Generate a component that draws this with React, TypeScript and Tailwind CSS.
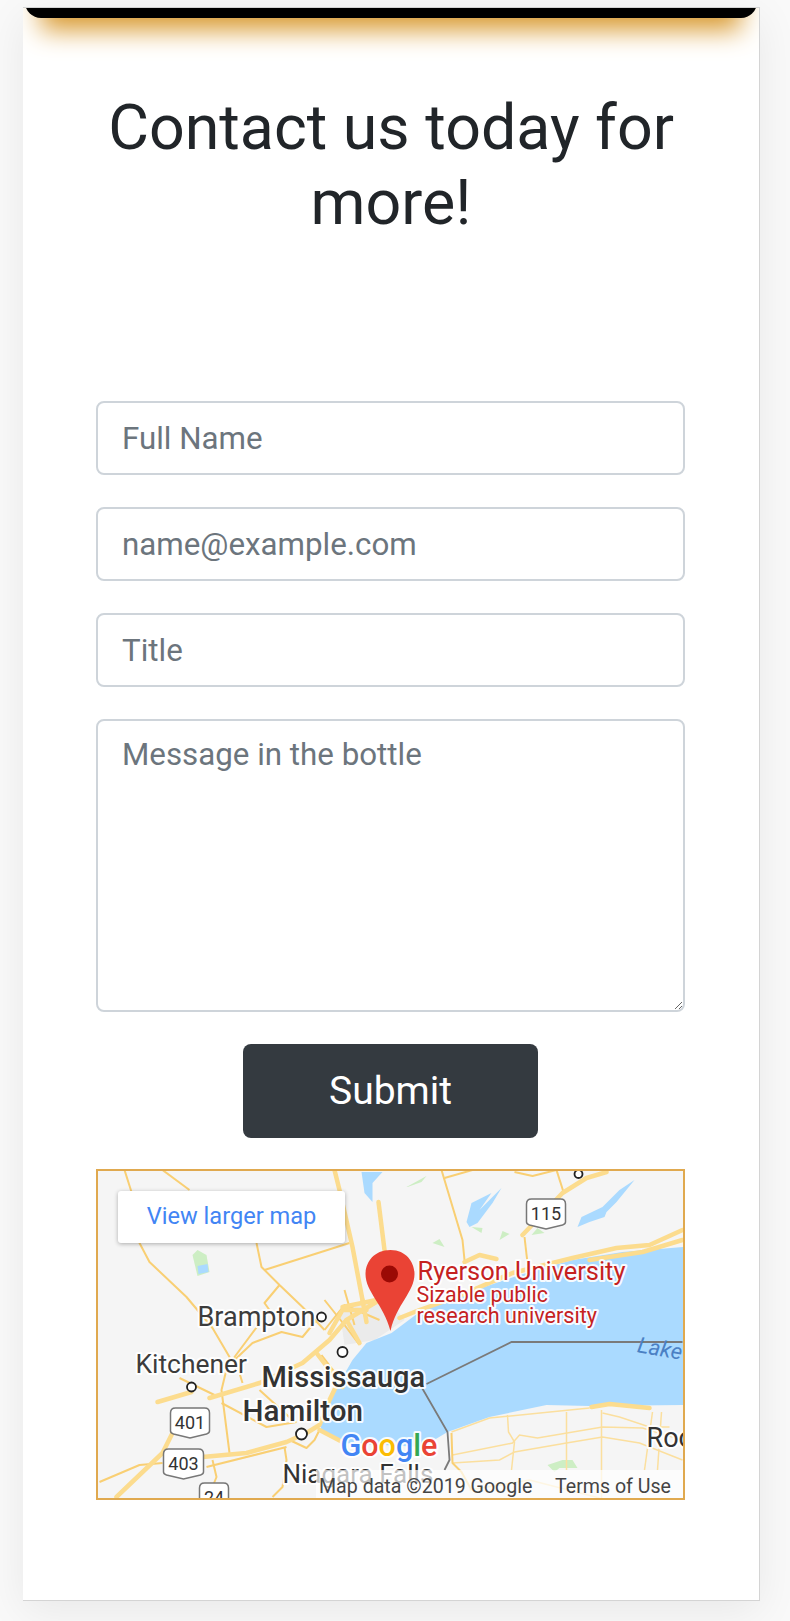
const bigRoads = [
  "335,1170 340,1190 353,1247 363,1300",
  "379,1202 385,1250 388,1262",
  "607,1172 587,1178 563,1193 523,1235",
  "683,1230 650,1245 617,1248 573,1258 513,1273 457,1297 420,1310 400,1318",
  "683,1240 643,1252 590,1260",
  "465,1262 480,1255 497,1259",
  "158,1402 192,1392",
  "210,1398 260,1383 303,1363 330,1340 347,1320 380,1300 396,1292",
  "117,1497 163,1453 173,1433",
  "203,1457 247,1453 287,1442 307,1433 320,1425 330,1400 342,1375",
  "320,1430 343,1442",
  "592,1407 610,1404 650,1408",
  "330,1333 343,1310 367,1310",
  "347,1320 360,1343",
  "363,1300 367,1322",
  "317,1353 343,1387",
  "343,1307 377,1300",
];

const thinRoads = [
  "125,1170 132,1192 140,1243 150,1262 187,1297 213,1328 230,1357 222,1390 230,1453",
  "163,1170 190,1190",
  "257,1243 262,1267 280,1285 303,1307 325,1330",
  "265,1270 350,1243",
  "280,1285 265,1303 270,1310 235,1357 243,1383",
  "442,1170 463,1240 465,1260",
  "445,1178 473,1170",
  "515,1172 533,1176 557,1170",
  "557,1170 564,1192",
  "525,1237 528,1263",
  "235,1360 253,1343 282,1332 303,1337 317,1320",
  "100,1482 140,1465 163,1463",
  "207,1467 287,1447",
  "222,1403 267,1427 297,1422",
  "260,1390 293,1420",
  "213,1460 217,1477 213,1487",
  "285,1447 287,1460 283,1487 273,1497",
  "320,1430 315,1440 307,1448 290,1440",
  "452,1433 453,1463 462,1472 472,1490",
  "180,1378 215,1395",
  "325,1300 345,1325 360,1345",
  "345,1290 355,1325",
  "325,1330 345,1305 380,1320",
  "322,1355 345,1385",
];

const southRoads = [
  "452,1432 490,1418 590,1408",
  "453,1455 513,1443 520,1435 538,1438 603,1427 643,1428 683,1440",
  "453,1463 500,1460 515,1452 567,1443 603,1437 640,1443 683,1460",
  "567,1412 567,1470",
  "602,1410 602,1498",
  "508,1415 509,1432 515,1442 512,1470",
  "653,1412 645,1470",
  "662,1412 658,1470",
  "603,1413 620,1417 650,1427 670,1427",
  "470,1490 530,1480 600,1498",
];

const green = [
  "407,1187 427,1176 422,1182 408,1187",
  "433,1243 440,1239 445,1247",
  "500,1240 503,1231 510,1234",
  "472,1227 483,1228 482,1233",
  "532,1235 538,1228 545,1233",
  "193,1255 198,1250 207,1255 210,1272 198,1276",
  "548,1465 563,1460 573,1460 578,1468 560,1468 555,1472",
];

const water = [
  "467,1222 472,1203 492,1193 480,1210 502,1188 493,1203 478,1223 470,1227",
  "578,1227 582,1217 603,1207 620,1190 635,1180 617,1202 607,1212 605,1217 590,1222",
  "362,1172 383,1172 373,1183 373,1202 365,1193",
  "198,1266 208,1264 209,1272 199,1274",
];

const towns = [
  { x: 322, y: 1317, r: 4.5 },
  { x: 343, y: 1352, r: 5 },
  { x: 192, y: 1387, r: 4.5 },
  { x: 302, y: 1434, r: 5.5 },
  { x: 579, y: 1174, r: 4 },
];

const shields = [
  { x: 171, y: 1408, w: 39, h: 30, label: "401" },
  { x: 164, y: 1449, w: 40, h: 30, label: "403" },
  { x: 200, y: 1483, w: 29, h: 30, label: "24" },
  { x: 527, y: 1199, w: 39, h: 30, label: "115" },
];

const halo = "[paint-order:stroke] stroke-white/90 stroke-[4px] [stroke-linejoin:round]";

function Shield({ x, y, w, h, label }: { x: number; y: number; w: number; h: number; label: string }) {
  return (
    <g>
      <path
        d={`M${x + 5} ${y}H${x + w - 5}Q${x + w} ${y} ${x + w} ${y + 5}V${y + h - 7}Q${x + w} ${y + h - 5} ${x + w - 3} ${y + h - 4}L${x + w / 2} ${y + h}L${x + 3} ${y + h - 4}Q${x} ${y + h - 5} ${x} ${y + h - 7}V${y + 5}Q${x} ${y} ${x + 5} ${y}Z`}
        fill="#fff"
        stroke="#777"
        strokeWidth="1.5"
      />
      <text x={x + w / 2} y={y + 21} textAnchor="middle" fontSize="18" fill="#333">
        {label}
      </text>
    </g>
  );
}

function MapPicture() {
  return (
    <svg viewBox="99 1171 584 327" className="block w-full h-full font-['Roboto',sans-serif]">
      <rect x="90" y="1160" width="600" height="340" fill="#f5f5f5" />

      {/* Toronto urban area */}
      <path d="M345 1345 L340 1310 L385 1295 L405 1320 L375 1340 Z" fill="#ebebeb" />

      {/* Lake Ontario */}
      <path
        d="M684 1247 L623 1252 L573 1260 L520 1275 L470 1292 L420 1312 L392 1333 L367 1343 L353 1360 L330 1400 L320 1423 L323 1433 L343 1443 L423 1447 L448 1432 L490 1417 L547 1405 L590 1406 L684 1405 Z"
        fill="#aadaff"
      />

      {green.map((p) => (
        <polygon key={p} points={p} fill="#cdeec4" />
      ))}
      {water.map((p) => (
        <polygon key={p} points={p} fill="#aadaff" />
      ))}

      {southRoads.map((p) => (
        <polyline key={p} points={p} fill="none" stroke="#fbdf9e" strokeWidth="1.5" />
      ))}
      {thinRoads.map((p) => (
        <polyline key={p} points={p} fill="none" stroke="#f9cf73" strokeWidth="2" strokeLinejoin="round" />
      ))}
      {bigRoads.map((p) => (
        <polyline key={p} points={p} fill="none" stroke="#fcdc8e" strokeWidth="4.5" strokeLinecap="round" strokeLinejoin="round" />
      ))}

      {/* Border across the lake */}
      <polyline points="683,1342 512,1342 427,1384" fill="none" stroke="#7a7a7a" strokeWidth="1.8" />
      <polyline points="422,1387 448,1432 450,1460 445,1470" fill="none" stroke="#7a7a7a" strokeWidth="1.8" />

      {shields.map((s) => (
        <Shield key={s.label} {...s} />
      ))}
      {towns.map((t) => (
        <circle key={t.x} cx={t.x} cy={t.y} r={t.r} fill="#fff" stroke="#222" strokeWidth="1.8" />
      ))}

      <text x="198" y="1326" fontSize="27" fill="#3c3c3c" className={halo}>Brampton</text>
      <text x="136" y="1373" fontSize="26.4" fill="#3c3c3c" className={halo}>Kitchener</text>
      <text x="262" y="1387" fontSize="29" fontWeight="500" fill="#333" className={halo}>Mississauga</text>
      <text x="243" y="1421" fontSize="29.6" fontWeight="500" fill="#333" className={halo}>Hamilton</text>
      <text x="283" y="1483" fontSize="26" fill="#333" className={halo}>Niagara Falls</text>
      <text x="647" y="1447" fontSize="27" fill="#333" className={halo}>Roc</text>
      <text x="637" y="1352" fontSize="22" fontStyle="italic" fill="#4a80c4" transform="rotate(10 637 1352)">Lake</text>

      <text x="418" y="1280" fontSize="25.4" fill="#c5221f" className={halo}>Ryerson University</text>
      <text x="417" y="1302" fontSize="21.4" fill="#c5221f" className={halo}>Sizable public</text>
      <text x="417" y="1323" fontSize="21.6" fill="#c5221f" className={halo}>research university</text>

      <text x="341" y="1456" fontSize="30.5" fontWeight="500" className={halo}>
        <tspan fill="#4285f4">G</tspan>
        <tspan fill="#ea4335">o</tspan>
        <tspan fill="#fbbc05">o</tspan>
        <tspan fill="#4285f4">g</tspan>
        <tspan fill="#34a853">l</tspan>
        <tspan fill="#ea4335">e</tspan>
      </text>

      {/* Pin */}
      <path
        d="M391 1250 C373 1250 366 1264 366 1274 C366 1292 384 1304 391 1331 C397 1304 415 1292 415 1274 C415 1264 408 1250 391 1250 Z"
        fill="#ea4335"
      />
      <circle cx="390" cy="1274" r="8.5" fill="#9b0a05" />
    </svg>
  );
}

export default function App() {
  const fieldClass =
    "w-full h-[74px] px-6 text-[31.3px] bg-white border-2 border-[#ced4da] rounded-lg text-[#495057] placeholder:text-[#6c757d] outline-none";

  return (
    <div className="h-[1621px] overflow-hidden bg-[#f9f9f9] pl-[23px] pt-[7px] font-['Roboto',sans-serif]">
      <div className="w-[737px] h-[1594px] bg-white border-t border-r border-b border-[#d4d4d4] shadow-[0_10px_40px_rgba(0,0,0,0.07)] overflow-hidden">
        {/* Top bar: a taller navbar scrolled out of view, only its bottom edge shows */}
        <div className="mx-[2px] -mt-[100px] h-[110px] bg-black rounded-b-[16px] shadow-[0_28px_26px_-16px_#d99a30]" />

        <h1 className="mt-[72px] px-[60px] text-center text-[62.7px] leading-[75px] font-normal text-[#212529]">
          Contact us today for more!
        </h1>

        <form className="mt-[161px] ml-[73px] w-[589px] flex flex-col gap-8">
          <input type="text" placeholder="Full Name" className={fieldClass} />
          <input type="email" placeholder="name@example.com" className={fieldClass} />
          <input type="text" placeholder="Title" className={fieldClass} />
          <textarea
            placeholder="Message in the bottle"
            className="w-full h-[293px] px-6 py-[11px] text-[31.3px] leading-[45px] bg-white border-2 border-[#ced4da] rounded-lg text-[#495057] placeholder:text-[#6c757d] outline-none resize-y block"
          />
          <button type="button" className="self-center w-[295px] h-[94px] bg-[#343a40] text-white text-[39px] rounded-lg">
            Submit
          </button>

          {/* Map */}
          <div className="relative h-[331px] -mt-px border-2 border-[#e0a94f] overflow-hidden">
            <MapPicture />
            <a className="absolute left-[20px] top-[20px] w-[227px] h-[52px] flex items-center justify-center bg-white rounded-[3px] shadow-[0_1px_4px_rgba(0,0,0,0.3)] text-[#4285f4] text-[23.6px]">
              View larger map
            </a>
            <div className="absolute right-0 bottom-0 w-[367px] h-[28px] flex items-center justify-between pl-[3px] pr-[12px] pt-[5px] bg-white/70 text-[19.6px] text-[#444]">
              <span>Map data ©2019 Google</span>
              <span>Terms of Use</span>
            </div>
          </div>
        </form>
      </div>
    </div>
  );
}
